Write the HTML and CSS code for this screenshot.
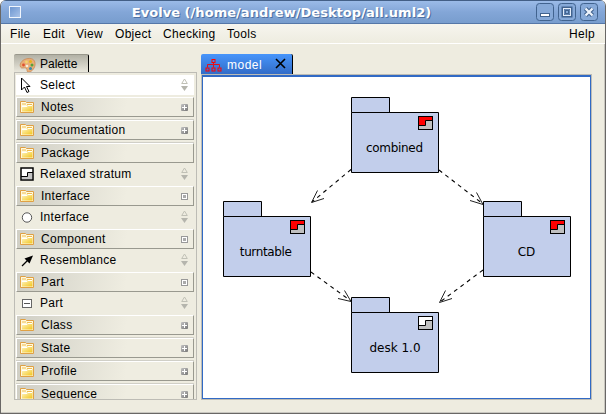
FILE: index.html
```html
<!DOCTYPE html>
<html lang="en">
<head>
<meta charset="utf-8">
<title>Evolve</title>
<link rel="stylesheet" href="styles.css">
</head>
<body>
<svg class="defs" width="0" height="0">
  <defs>
    <linearGradient id="gold" x1="0" y1="0" x2="1" y2="1"><stop offset="0" stop-color="#fff6c8"/><stop offset="1" stop-color="#f2c51c"/></linearGradient>
    <linearGradient id="knob" x1="0" y1="0" x2="1" y2="1"><stop offset="0" stop-color="#c2c2c2"/><stop offset="1" stop-color="#777"/></linearGradient>
    <symbol id="folder" viewBox="0 0 14 12"><path d="M.5 11.500V.5h5l1 1h7v10z" fill="#fff8dc" stroke="#dfa044"/><path d="M2 10.500V5h4l1-1h5.500v6.500z" fill="url(#gold)"/><path d="M2 3h4M7 3.500h5" stroke="#f0bd50"/><path d="M2 5.500h5l1-1h4" fill="none" stroke="#fff"/></symbol>
    <symbol id="plus" viewBox="0 0 7 7"><rect width="7" height="7" rx="1" fill="url(#knob)"/><path d="M1 3.500h5M3.500 1v5" stroke="#fff"/></symbol>
    <symbol id="open" viewBox="0 0 7 7"><rect x=".5" y=".5" width="6" height="6" fill="#fff" stroke="#999"/><rect x="2" y="2" width="3" height="3" fill="#aaa"/></symbol>
    <symbol id="updown" viewBox="0 0 7 14"><path d="M3.500 1L6.300 5.500H.7z" fill="none" stroke="#c0c0b6"/><path d="M0 8h7L3.500 13z" fill="#b5b5ad"/></symbol>
    <symbol id="stratum" viewBox="0 0 15 14"><rect x=".5" y=".5" width="14" height="13" fill="currentColor" stroke="#000"/><path d="M1 9.500h6.500v-5H14V13H1z" fill="#c0c0c0"/><path d="M1 9.500h6.500v-5H14" fill="none" stroke="#000"/></symbol>
  </defs>
</svg>
<div class="window">
  <header class="titlebar">
    <span class="sysmenu"></span>
    <h1>Evolve (/home/andrew/Desktop/all.uml2)</h1>
    <svg class="controls" width="62" height="19" fill="none">
      <g fill="#86a9d8" stroke="#41638f"><rect x=".5" y=".5" width="17" height="17" rx="3"/><rect x="22.500" y=".5" width="17" height="17" rx="3"/><rect x="44.500" y=".5" width="17" height="17" rx="3"/></g>
      <rect x="4.500" y="10.500" width="9" height="3" fill="#fff" stroke="#41638f"/>
      <rect x="27" y="5" width="8" height="8" stroke="#41638f" stroke-width="3"/><rect x="27.500" y="5.500" width="7" height="7" stroke="#e4edfa"/><rect x="29.500" y="7.500" width="3" height="3" stroke="#41638f"/>
      <path d="M49.500 5.500l7 7m0-7l-7 7" stroke="#41638f" stroke-width="4.500"/><path d="M49.500 5.500l7 7m0-7l-7 7" stroke="#eef4fc" stroke-width="2.300"/>
    </svg>
  </header>
  <nav class="menubar"><span class="m-file">File</span><span class="m-edit">Edit</span><span class="m-view">View</span><span class="m-object">Object</span><span class="m-check">Checking</span><span class="m-tools">Tools</span><span class="m-help">Help</span></nav>
  <main class="workspace">
    <aside class="side">
      <div class="tab palette-tab">
        <svg class="art" width="17" height="16"><path d="M1.500 10C0 6 4 2 9 1.500c5-.5 7.500 2 7 6.500-.5 4-4 7.500-7 7-2-.5 0-3-2-4-2-.7-4.500 1-5.500-1z" fill="#e8ae78" stroke="#c98a58" stroke-width=".8"/><circle cx="4.500" cy="8" r="1.400" fill="#e05030"/><circle cx="7.500" cy="5" r="1.400" fill="#f4d36a"/><circle cx="11.500" cy="4.500" r="1.500" fill="#e8b01c"/><circle cx="13" cy="8" r="1.500" fill="#55a33b"/><circle cx="11.500" cy="11.500" r="1.500" fill="#3d8aad"/><circle cx="8" cy="9" r="1.300" fill="#f4ede0"/></svg>
        <span class="label">Palette</span>
      </div>
      <div class="palette">
        <div class="item selected"><svg class="icon" width="14" height="17"><path d="M1.500 1v12l3-3 2.500 5.500 2-1L6.500 9.500H10z" fill="#fff" stroke="#000"/></svg><span>Select</span><svg class="sort"><use href="#updown"/></svg></div>
        <div class="group"><svg class="icon folder"><use href="#folder"/></svg><span>Notes</span><svg class="toggle"><use href="#plus"/></svg></div><div class="gap"></div>
        <div class="group"><svg class="icon folder"><use href="#folder"/></svg><span>Documentation</span><svg class="toggle"><use href="#plus"/></svg></div><div class="gap"></div>
        <div class="group"><svg class="icon folder"><use href="#folder"/></svg><span>Package</span></div>
        <div class="item"><svg class="icon" width="14" height="14"><rect x="1" y="1" width="12" height="12" fill="#fff" stroke="#000" stroke-width="1.500"/><path d="M2 9.500h5.500v-4H12V12H2z" fill="#c4c4c4"/><path d="M1 9.500h6.500v-4H13" fill="none" stroke="#000"/></svg><span>Relaxed stratum</span><svg class="sort"><use href="#updown"/></svg></div>
        <div class="group"><svg class="icon folder"><use href="#folder"/></svg><span>Interface</span><svg class="toggle"><use href="#open"/></svg></div>
        <div class="item"><svg class="icon" width="14" height="14"><circle cx="7" cy="7.500" r="4.700" fill="#fff" stroke="#555"/></svg><span>Interface</span><svg class="sort"><use href="#updown"/></svg></div>
        <div class="group"><svg class="icon folder"><use href="#folder"/></svg><span>Component</span><svg class="toggle"><use href="#open"/></svg></div>
        <div class="item"><svg class="icon" width="14" height="14"><path d="M2 13l6-6" stroke="#000" stroke-width="1.300"/><path d="M13 2.500L4.500 5.500l5 5z"/></svg><span>Resemblance</span><svg class="sort"><use href="#updown"/></svg></div>
        <div class="group"><svg class="icon folder"><use href="#folder"/></svg><span>Part</span><svg class="toggle"><use href="#open"/></svg></div>
        <div class="item"><svg class="icon" width="14" height="14"><rect x="2.500" y="3.500" width="9" height="8" fill="#fff" stroke="#666"/><path d="M4 7.500h6" stroke="#555"/></svg><span>Part</span><svg class="sort"><use href="#updown"/></svg></div>
        <div class="group"><svg class="icon folder"><use href="#folder"/></svg><span>Class</span><svg class="toggle"><use href="#plus"/></svg></div><div class="gap"></div>
        <div class="group"><svg class="icon folder"><use href="#folder"/></svg><span>State</span><svg class="toggle"><use href="#plus"/></svg></div><div class="gap"></div>
        <div class="group"><svg class="icon folder"><use href="#folder"/></svg><span>Profile</span><svg class="toggle"><use href="#plus"/></svg></div><div class="gap"></div>
        <div class="group"><svg class="icon folder"><use href="#folder"/></svg><span>Sequence</span><svg class="toggle"><use href="#plus"/></svg></div>
      </div>
    </aside>
    <section class="editor">
      <div class="tab model-tab">
        <svg class="tree" width="17" height="14" fill="none" stroke="#f00"><path d="M8.500 4v5.500M2.500 9.500v-3h12v3" stroke="#e0101c"/><g><rect x="7" y="1.500" width="3" height="3"/><rect x="1" y="10" width="3" height="3"/><rect x="7" y="10" width="3" height="3"/><rect x="13" y="10" width="3" height="3"/></g></svg>
        <span class="label">model</span>
        <svg class="close" width="11" height="11"><path d="M1 1l9 9m0-9l-9 9" stroke="#000" stroke-width="1.600"/></svg>
      </div>
      <div class="canvas">
        <svg class="diagram" viewBox="203 77 387 321" width="387" height="321">
          <g fill="#c2ceeb" stroke="#000">
            <path d="M351.500 112.500v-15h38v15M351.500 112.500h87v60h-87z"/>
            <path d="M223.500 216.500v-15h38v15M223.500 216.500h87v60h-87z"/>
            <path d="M483.500 216.500v-15h38v15M483.500 216.500h87v60h-87z"/>
            <path d="M351.500 312.500v-15h38v15M351.500 312.500h87v60h-87z"/>
          </g>
          <g class="red"><use href="#stratum" x="418" y="116" width="15" height="14"/><use href="#stratum" x="290" y="220" width="15" height="14"/><use href="#stratum" x="550" y="220" width="15" height="14"/></g>
          <use class="white" href="#stratum" x="418" y="316" width="15" height="14"/>
          <g stroke="#000" stroke-width="1.100" stroke-dasharray="4 4"><path d="M351 169.500L312 202"/><path d="M439 170l44 34"/><path d="M311 272l40 29"/><path d="M483 270l-43 32"/></g>
          <g fill="none" stroke="#222"><path d="M317.500 190.500l-6 12 12.500-4"/><path d="M476.500 192.500l6.500 12-13-4"/><path d="M344.500 290.500l6.500 11-13-3"/><path d="M445.500 290.500l-6 12 12.500-4"/></g>
          <g class="names" text-anchor="middle"><text x="394.500" y="152" textLength="57">combined</text><text x="265.800" y="256" textLength="52">turntable</text><text x="526.500" y="256">CD</text><text x="395" y="352">desk 1.0</text></g>
        </svg>
      </div>
    </section>
  </main>
</div>
</body>
</html>
```
FILE: styles.css
```css
* { box-sizing: border-box; }
body { margin: 0; background: #fff; font: 12px "Liberation Sans", Arial, sans-serif; color: #000; }
svg { display: block; flex: none; }
.defs { position: absolute; }
.window { width: 606px; height: 414px; display: flex; flex-direction: column; background: #eeece0; border: solid #696765; border-width: 0 1px 1px; border-radius: 6px 6px 0 0; overflow: hidden; box-shadow: inset -1px -1px #c9c7c0; }
.titlebar { height: 24px; flex: none; display: flex; align-items: center; padding: 0 7px 0 8px; border-top: 1px solid #435f86; border-bottom: 1px solid #5577a8; background: linear-gradient(#9bbbe8, #83a6d7 50%, #789dce); }
.sysmenu { width: 12px; height: 12px; border: 1px solid #f0f5fc; background: linear-gradient(135deg, #6d96d0, #a9c3e9); }
.titlebar h1 { flex: 1; margin: 0 0 0 6px; text-align: center; font: bold 13px "DejaVu Sans", sans-serif; letter-spacing: .04px; color: #fff; text-shadow: 1px 1px #4d70a2; white-space: nowrap; }
.controls { margin-top: 1px; }
.menubar { height: 20px; flex: none; display: flex; align-items: center; padding: 0 10px 0 9px; background: linear-gradient(#f6f5ee, #eeece0); border-bottom: 1px solid #fff; letter-spacing: .3px; }
.menubar span { white-space: nowrap; }
.m-file { width: 33px; }
.m-edit { width: 33px; }
.m-view { width: 39px; }
.m-object { width: 48px; }
.m-check { width: 64px; }
.m-help { margin-left: auto; }
.workspace { flex: 1; min-height: 0; display: flex; gap: 4px; padding: 10px 13px 13px; }
.side { width: 183px; display: flex; flex-direction: column; }
.tab { display: flex; align-items: center; flex: none; border-right: 1px solid #000; border-radius: 2px 2px 0 0; }
.palette-tab { width: 75px; height: 18px; padding-left: 5px; border-top: 1px solid #99988c; background: linear-gradient(#b2b1a5, #e9e7dc); }
.palette-tab .label { margin-left: 4px; }
.art { margin-top: 3px; }
.palette { flex: 1; min-height: 0; overflow: hidden; border: 1px solid #bdbcb5; padding: 2px 2px 0 1px; }
.group, .item { display: flex; align-items: center; padding-left: 3px; letter-spacing: .28px; white-space: nowrap; }
.group { height: 20px; border: 1px solid #fff; border-right-color: #99998f; border-bottom-color: #99998f; background: linear-gradient(100deg, #d0cfc5, #efede1 62%); padding-right: 5px; }
.item { height: 23px; padding: 0 6px 2px 4px; }
.selected { height: 20px; padding-bottom: 0; margin-bottom: 2px; background: #fff; }
.gap { height: 3px; padding-top: 1px; border-bottom: 1px solid #d0cfc7; }
.group span, .item span { margin-left: 7px; flex: 1; }
.item span { margin-left: 6px; }
.folder { width: 14px; height: 12px; }
.toggle { width: 7px; height: 7px; }
.sort { width: 7px; height: 14px; }
.editor { flex: 1; display: flex; flex-direction: column; }
.model-tab { width: 92px; height: 21px; padding-left: 4px; background: linear-gradient(#4795fb, #316ac5); color: #fff; }
.model-tab .label { margin-left: 5px; flex: 1; letter-spacing: .5px; }
.close { margin: 0 6px 2px 0; }
.canvas { flex: 1; min-height: 0; background: #fff; border: 1px solid #316ac5; border-top-width: 2px; margin: 0 1px 1px; box-shadow: 0 0 0 1px #bdbcb5; overflow: hidden; }
.red { color: #f00; }
.white { color: #fff; }
.names { font: 12px "DejaVu Sans", sans-serif; }
```
